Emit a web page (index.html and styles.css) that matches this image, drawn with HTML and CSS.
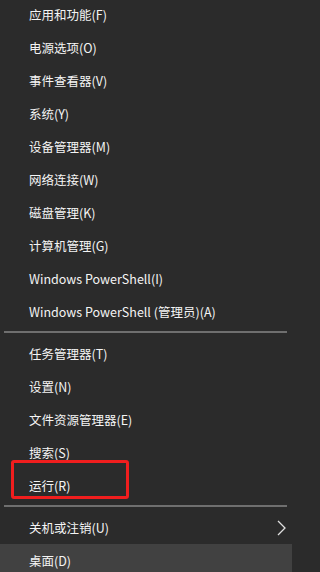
FILE: index.html
```html
<!DOCTYPE html>
<html lang="zh-CN">
<head>
<meta charset="utf-8">
<link rel="stylesheet" href="styles.css">
</head>
<body>
<div class="menu">
  <div class="group group-top">
    <div class="item">应用和功能(F)</div>
    <div class="item">电源选项(O)</div>
    <div class="item">事件查看器(V)</div>
    <div class="item">系统(Y)</div>
    <div class="item">设备管理器(M)</div>
    <div class="item">网络连接(W)</div>
    <div class="item">磁盘管理(K)</div>
    <div class="item">计算机管理(G)</div>
    <div class="item">Windows PowerShell(I)</div>
    <div class="item">Windows PowerShell (管理员)(A)</div>
  </div>
  <div class="sep"></div>
  <div class="group">
    <div class="item">任务管理器(T)</div>
    <div class="item">设置(N)</div>
    <div class="item">文件资源管理器(E)</div>
    <div class="item">搜索(S)</div>
    <div class="item item-marked"><span class="mark"></span>运行(R)</div>
  </div>
  <div class="sep"></div>
  <div class="group">
    <div class="item item-sub">关机或注销(U)
      <svg class="chev" width="9" height="16" viewBox="0 0 9 16"><path d="M1 1 L8 8 L1 15" fill="none" stroke="#e0e0e0" stroke-width="1.3"/></svg>
    </div>
    <div class="item item-hover">桌面(D)</div>
  </div>
</div>
</body>
</html>
```
FILE: styles.css
```css
html, body {
  margin: 0;
  padding: 0;
  background: #2b2b2b;
  width: 292px;
  height: 572px;
  overflow: hidden;
}
.menu {
  display: flex;
  flex-direction: column;
  margin-top: -2px;
  font-family: "Noto Sans CJK SC", "Noto Sans", sans-serif;
  font-size: 12.5px;
  color: #f4f4f4;
}
.group {
  display: flex;
  flex-direction: column;
}
.item {
  position: relative;
  height: 33px;
  display: flex;
  align-items: center;
  padding-left: 29px;
  padding-right: 6px;
  white-space: nowrap;
}
.sep {
  height: 2px;
  margin: 3px 5px 4px 4px;
  background: #6f6f6f;
}
.item-sub {
  justify-content: space-between;
}
.chev {
  display: block;
}
.item-hover {
  background: #414141;
}
.mark {
  position: absolute;
  left: 11px;
  top: -9px;
  width: 112px;
  height: 33px;
  border: 3px solid #f01e1e;
  border-radius: 3px;
}
```
